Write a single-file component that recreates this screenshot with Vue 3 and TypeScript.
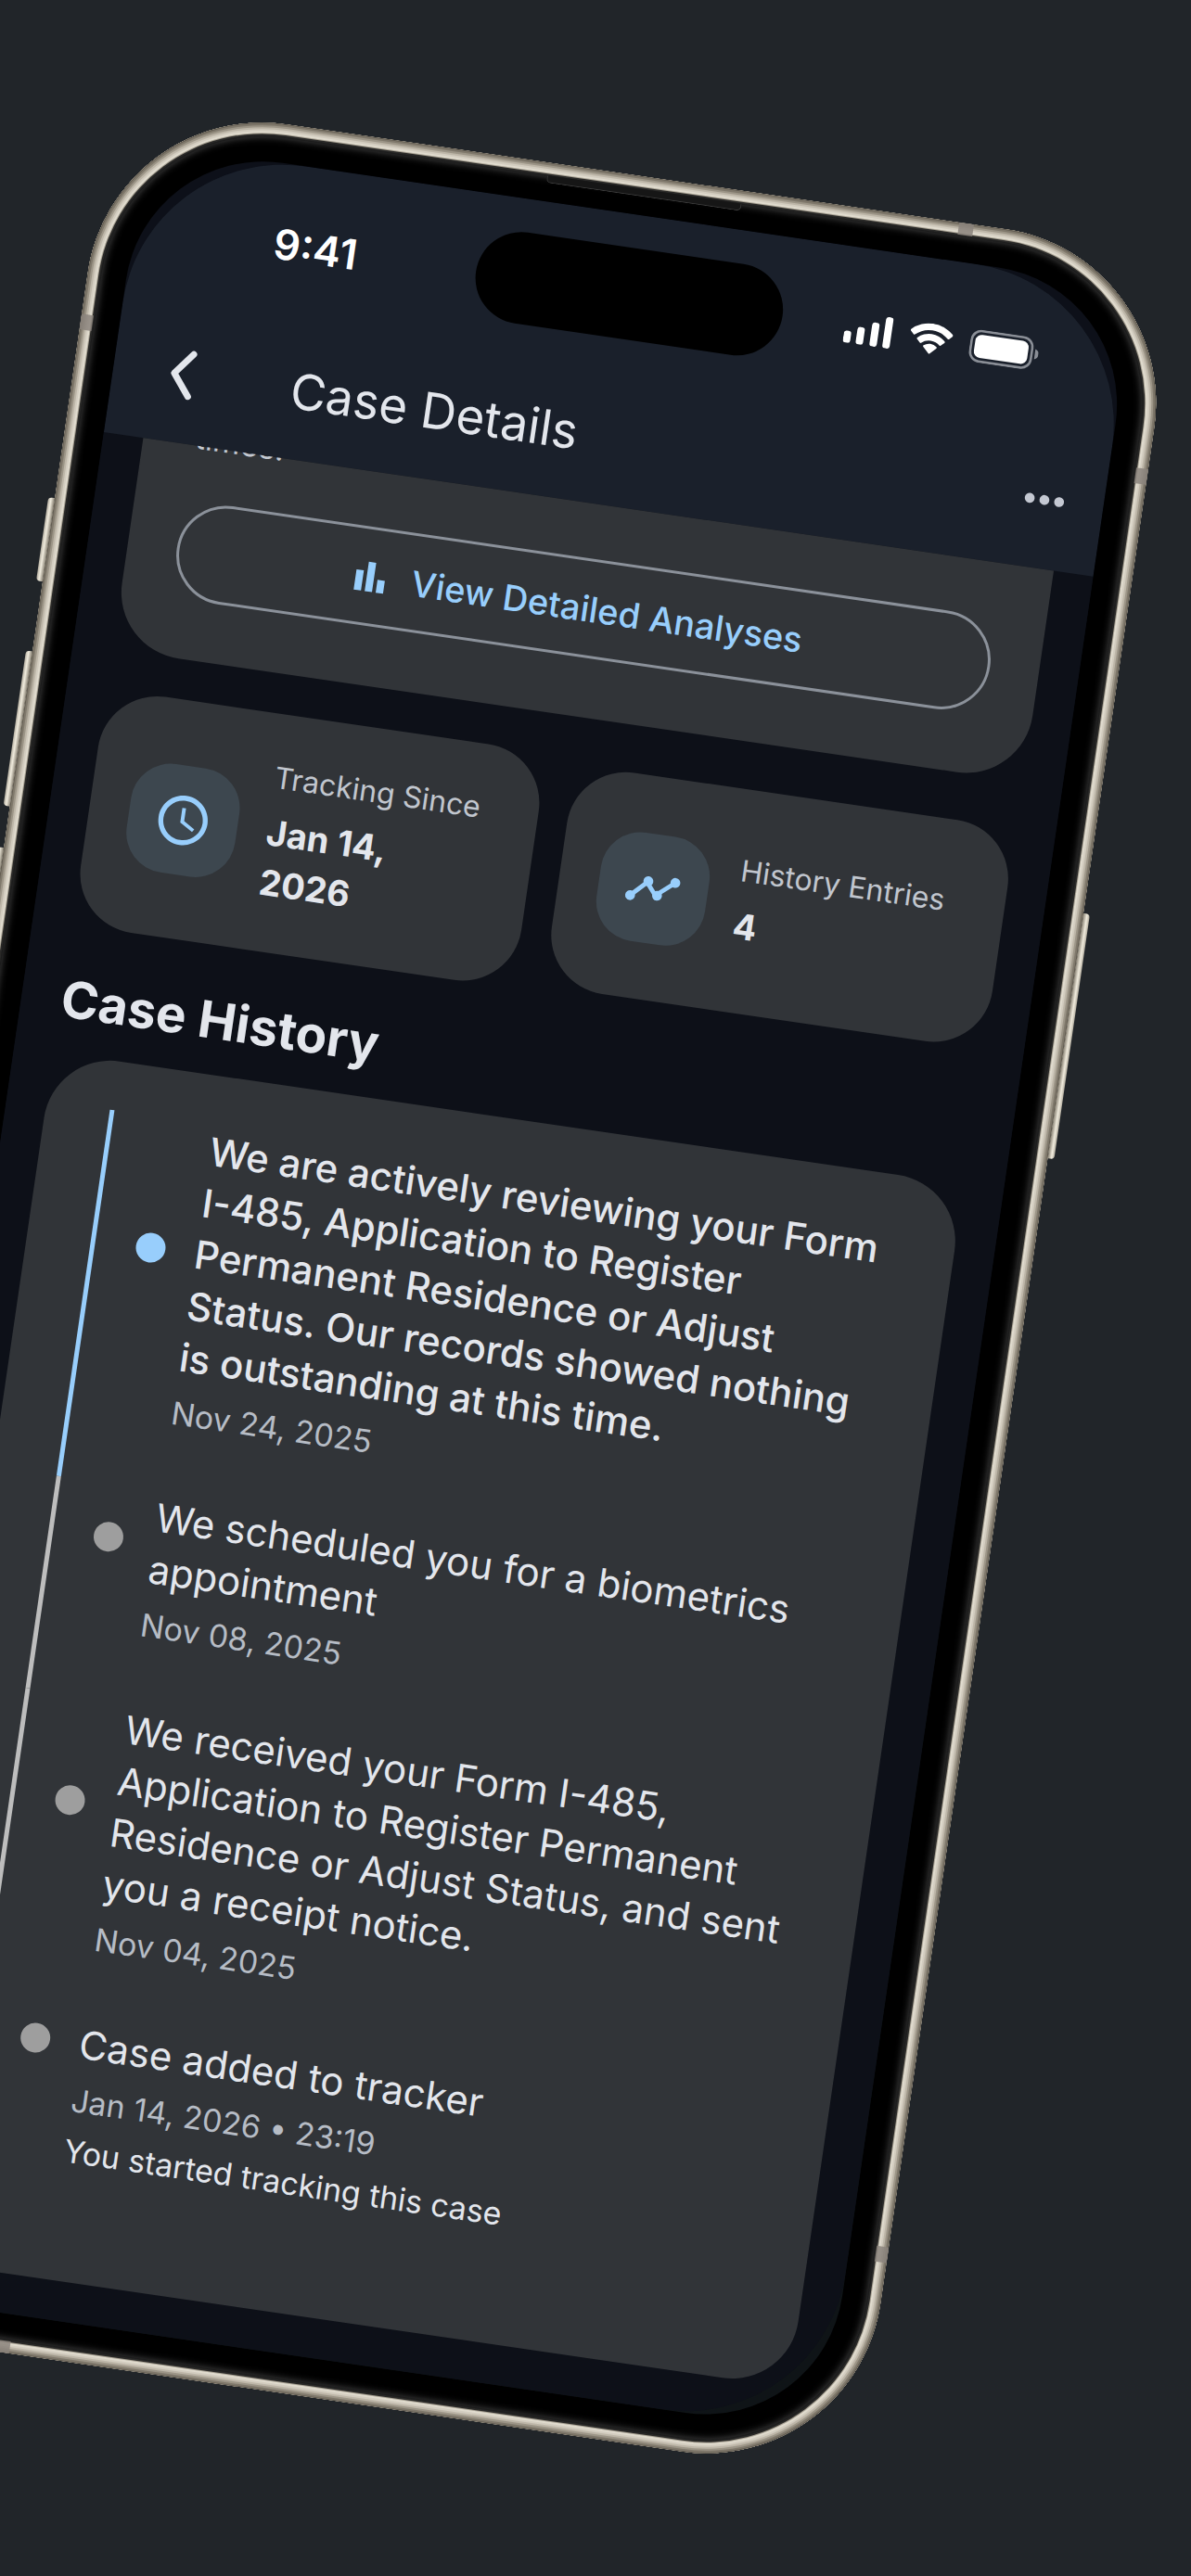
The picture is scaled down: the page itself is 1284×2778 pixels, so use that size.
<script setup lang="ts">
interface Stat {
  label: string
  value: string
  icon: 'clock' | 'trend'
}

interface Entry {
  title: string
  date: string
  note?: string
  current?: boolean
}

const stats: Stat[] = [
  { label: 'Tracking Since', value: 'Jan 14,\n2026', icon: 'clock' },
  { label: 'History Entries', value: '4', icon: 'trend' },
]

const entries: Entry[] = [
  {
    title:
      'We are actively reviewing your Form I-485, Application to Register Permanent Residence or Adjust Status. Our records showed nothing is outstanding at this time.',
    date: 'Nov 24, 2025',
    current: true,
  },
  { title: 'We scheduled you for a biometrics appointment', date: 'Nov 08, 2025' },
  {
    title:
      'We received your Form I-485, Application to Register Permanent Residence or Adjust Status, and sent you a receipt notice.',
    date: 'Nov 04, 2025',
  },
  {
    title: 'Case added to tracker',
    date: 'Jan 14, 2026 • 23:19',
    note: 'You started tracking this case',
  },
]
</script>

<template>
  <div class="page">
    <div class="stage">
      <div class="phone">
        <i class="key key-action"></i>
        <i class="key key-up"></i>
        <i class="key key-down"></i>
        <i class="key key-power"></i>
        <i class="band band-top"></i>
        <i class="band band-bottom"></i>
        <i class="band band-side left upper"></i>
        <i class="band band-side right upper"></i>
        <i class="band band-side left lower"></i>
        <i class="band band-side right lower"></i>

        <div class="bezel">
          <i class="speaker"></i>
          <div class="glass">
            <main class="screen">
              <header class="header">
                <div class="status">
                  <span class="time">9:41</span>
                  <i class="island"></i>
                  <div class="status-icons">
                    <svg class="signal" viewBox="0 0 52 34" aria-hidden="true">
                      <rect x="0" y="21" width="8" height="13" rx="3" />
                      <rect x="14" y="15" width="8" height="19" rx="3" />
                      <rect x="29" y="8" width="8" height="26" rx="3" />
                      <rect x="43" y="0" width="8" height="34" rx="3" />
                    </svg>
                    <svg class="wifi" viewBox="0 0 17 12.3" aria-hidden="true">
                      <path d="M8.5 2.6c2.5 0 4.8.9 6.6 2.6.1.1.4.1.5 0l1.300-1.300c.2-.2.2-.4 0-.6a12.100 12.100 0 0 0-16.800 0c-.2.2-.2.4 0 .6l1.300 1.300c.1.1.4.1.5 0A9.600 9.600 0 0 1 8.500 2.600z" />
                      <path d="M8.500 6.800c1.400 0 2.700.5 3.700 1.400.1.100.4.100.5 0l1.300-1.300c.2-.2.2-.4 0-.6a8 8 0 0 0-11 0c-.2.2-.2.4 0 .6l1.300 1.300c.1.100.4.100.5 0a5.500 5.500 0 0 1 3.700-1.400z" />
                      <path d="M11.100 9.600c.2-.2.2-.4 0-.6a4 4 0 0 0-5.200 0c-.2.2-.2.4 0 .6l2.300 2.300c.2.200.4.200.6 0z" />
                    </svg>
                    <svg class="battery" viewBox="0 0 75 36" aria-hidden="true">
                      <rect x="1.500" y="1.500" width="66" height="33" rx="10.500" fill="none" stroke="#8a8e96" stroke-width="2.600" />
                      <rect x="5.500" y="5.500" width="58" height="25" rx="7" />
                      <path d="M71 12.500c3 1 4 3 4 5.500s-1 4.500-4 5.500z" fill="#8a8e96" />
                    </svg>
                  </div>
                </div>
                <div class="appbar">
                  <button class="back" type="button" aria-label="Back">
                    <svg viewBox="0 0 64 64" aria-hidden="true">
                      <path d="M41 9 23 32l18 23" fill="none" stroke="currentColor" stroke-width="7" stroke-linecap="round" stroke-linejoin="round" />
                    </svg>
                  </button>
                  <h1>Case Details</h1>
                  <button class="more" type="button" aria-label="More options">
                    <svg viewBox="0 0 24 24" aria-hidden="true">
                      <circle cx="6" cy="12" r="2" />
                      <circle cx="12" cy="12" r="2" />
                      <circle cx="18" cy="12" r="2" />
                    </svg>
                  </button>
                </div>
              </header>

              <div class="content">
                <section class="card summary">
                  <p>times.</p>
                  <button class="analyses" type="button">
                    <svg viewBox="0 0 24 24" aria-hidden="true">
                      <path d="M4 9h4v11H4zM16 13h4v7h-4zM10 4h4v16h-4z" />
                    </svg>
                    View Detailed Analyses
                  </button>
                </section>

                <section class="stats">
                  <div v-for="stat in stats" :key="stat.label" class="stat">
                    <div class="stat-icon">
                      <svg v-if="stat.icon === 'clock'" viewBox="0 0 24 24" aria-hidden="true">
                        <path d="M11.990 2C6.470 2 2 6.480 2 12s4.470 10 9.990 10C17.520 22 22 17.520 22 12S17.520 2 11.990 2zM12 20c-4.420 0-8-3.580-8-8s3.580-8 8-8 8 3.580 8 8-3.580 8-8 8zm.5-13H11v6l5.250 3.150.75-1.230-4.500-2.670z" />
                      </svg>
                      <svg v-else viewBox="0 0 24 24" aria-hidden="true">
                        <path d="M3 16 9.300 9.700 13.300 14.500 21 8" fill="none" stroke="currentColor" stroke-width="1.800" />
                        <circle cx="3.200" cy="15.800" r="2" />
                        <circle cx="9.700" cy="9.200" r="2" />
                        <circle cx="14" cy="14.500" r="2" />
                        <circle cx="20.600" cy="8.300" r="2" />
                      </svg>
                    </div>
                    <div class="stat-text">
                      <span class="stat-label">{{ stat.label }}</span>
                      <strong>{{ stat.value }}</strong>
                    </div>
                  </div>
                </section>

                <h2>Case History</h2>

                <ol class="card timeline">
                  <li v-for="entry in entries" :key="entry.title" :class="{ current: entry.current }">
                    <div class="entry">
                      <div class="entry-head">
                        <i class="dot"></i>
                        <h3>{{ entry.title }}</h3>
                      </div>
                      <p class="date">{{ entry.date }}</p>
                      <p v-if="entry.note" class="note">{{ entry.note }}</p>
                    </div>
                  </li>
                </ol>
              </div>
            </main>
          </div>
        </div>
      </div>
    </div>
  </div>
</template>

<style>
body {
  background: #212529;
}
</style>

<style scoped>
.page {
  min-height: 100vh;
  overflow: hidden;
  background: #212529;
  color: #e3e6ec;
  font-family: Inter, Roboto, 'Liberation Sans', sans-serif;
}

.page *,
.page *::before {
  box-sizing: border-box;
}

h1,
h2,
h3,
p,
ol {
  margin: 0;
  padding: 0;
}

button {
  padding: 0;
  border: 0;
  background: none;
  font: inherit;
}

svg {
  display: block;
  flex: none;
  fill: currentColor;
}

/* The handset leans to the right and runs off the left edge. */
.stage {
  display: flow-root;
  transform: rotate(8.3deg);
  transform-origin: 0 0;
}

.phone {
  position: relative;
  margin: 88px -14px 0 136px;
  padding: 14px;
  border-radius: 190px;
  background: #2a2a29;
  box-shadow:
    inset 0 0 0 1px #625c51,
    inset 0 0 0 3px #7f786b,
    inset 0 0 0 5px #9c9587,
    inset 0 0 0 7px #bdb6a8,
    inset 0 0 0 9px #d3cdc0,
    inset 0 0 0 11px #e0dbce,
    inset 0 0 0 12px #a8a294,
    inset 0 0 0 13px #2b2a28;
}

.key {
  position: absolute;
  z-index: -1;
  width: 14px;
  border-radius: 4px;
  background: linear-gradient(90deg, #b5afa1, #f0ebdd 3px, #8a8375 7px, #6d675b);
}

.key-action {
  top: 435px;
  left: -7px;
  height: 91px;
}

.key-up {
  top: 602px;
  left: -7px;
  height: 169px;
}

.key-down {
  top: 816px;
  left: -7px;
  height: 169px;
}

.key-power {
  top: 718px;
  right: -7px;
  height: 267px;
  transform: scaleX(-1);
}

.band {
  position: absolute;
  background: #8b847c;
  opacity: 0.85;
}

.band-top,
.band-bottom {
  width: 16px;
  height: 13px;
}

.band-top {
  top: 0;
  right: 224px;
}

.band-bottom {
  bottom: 0;
  left: 224px;
}

.band-side {
  width: 13px;
  height: 17px;
}

.left {
  left: 0;
}

.right {
  right: 0;
}

.upper {
  top: 234px;
}

.lower {
  bottom: 233px;
}

.bezel {
  position: relative;
  padding: 28px;
  border-radius: 176px;
  background: #000;
  box-shadow:
    inset 0 0 0 1px #1c1c1c,
    inset 0 0 8px 1px #4a4a4a;
}

.speaker {
  position: absolute;
  top: 0;
  left: 50%;
  width: 212px;
  height: 8px;
  margin-left: -106px;
  border: 1px solid #3c3c3c;
  border-top: 0;
  border-radius: 0 0 5px 5px;
  background: #161616;
}

.glass {
  border-radius: 149px;
  background: linear-gradient(#0d1019 50%, #0f1417 80%);
  overflow: hidden;
}

.screen {
  border-radius: 174px;
  background: #0d1018;
  overflow: hidden;
}

.header {
  background: #1a202b;
}

.status {
  position: relative;
  display: flex;
  align-items: center;
  justify-content: space-between;
  height: 166px;
  padding: 8px 93px 0 152px;
  color: #fff;
}

.time {
  font-size: 45px;
  font-weight: 600;
  line-height: 54px;
}

.island {
  position: absolute;
  top: 36px;
  left: 50%;
  width: 334px;
  height: 99px;
  margin-left: -167px;
  border-radius: 50px;
  background: #000;
}

.status-icons {
  display: flex;
  align-items: center;
  gap: 19px;
}

.signal {
  width: 52px;
  height: 34px;
}

.wifi {
  width: 46px;
  height: 34px;
}

.battery {
  width: 75px;
  height: 36px;
}

.appbar {
  display: flex;
  align-items: center;
  height: 149px;
  padding-right: 32px;
}

.back {
  display: flex;
  align-items: center;
  justify-content: center;
  width: 150px;
  height: 128px;
  margin-right: 43px;
  color: #e3e6ec;
}

.back svg,
.more svg {
  width: 64px;
  height: 64px;
}

.more {
  margin-left: auto;
  color: #c4c8d2;
}

h1 {
  font-size: 53px;
  font-weight: 400;
  line-height: 70px;
}

.content {
  padding: 0 43px 43px;
  overflow: hidden;
}

.card {
  border-radius: 72px;
  background: #313438;
}

.summary {
  margin-top: -84px;
  padding: 53px 53px 64px;
}

.summary p {
  margin: 0 3px 47px;
  color: #c4c8d0;
  font-size: 34px;
  line-height: 43px;
}

.analyses {
  display: flex;
  align-items: center;
  justify-content: center;
  gap: 21px;
  width: 100%;
  height: 107px;
  padding-right: 18px;
  border: 3px solid #8b919a;
  border-radius: 54px;
  color: #98cefc;
  font-size: 38px;
  font-weight: 500;
  line-height: 54px;
}

.analyses svg {
  width: 48px;
  height: 48px;
}

.stats {
  display: grid;
  grid-template-columns: 1fr 1fr;
  align-items: center;
  gap: 32px;
  margin-top: 43px;
}

.stat {
  display: flex;
  align-items: center;
  gap: 32px;
  min-height: 241px;
  padding: 48px 32px 48px 43px;
  border-radius: 64px;
  background: #313438;
}

.stat-icon {
  flex: none;
  padding: 27px;
  border-radius: 43px;
  background: #3d474f;
  color: #98cefc;
}

.stat-icon svg {
  width: 64px;
  height: 64px;
}

.stat-text {
  display: flex;
  flex-direction: column;
  gap: 11px;
}

.stat-label {
  color: #c1c6ce;
  font-size: 32px;
  line-height: 42px;
  white-space: nowrap;
}

.stat strong {
  font-size: 38px;
  font-weight: 700;
  line-height: 54px;
  white-space: pre-line;
}

h2 {
  margin: 45px 0 24px;
  font-size: 55px;
  font-weight: 700;
  line-height: 70px;
}

.timeline {
  padding: 53px;
  list-style: none;
}

.timeline li {
  display: flex;
  padding-left: 16px;
}

.timeline li::before {
  content: '';
  flex: none;
  width: 5px;
  margin-right: 44px;
  background: #bdbdbd;
}

.timeline .current::before {
  background: #98cefc;
}

.entry {
  padding-bottom: 64px;
}

.entry-head {
  display: flex;
  align-items: center;
  gap: 32px;
  padding-top: 1px;
}

.dot {
  flex: none;
  width: 32px;
  height: 32px;
  border-radius: 50%;
  background: #9e9e9e;
}

.current .dot {
  background: #98cefc;
}

h3 {
  font-size: 42px;
  font-weight: 400;
  line-height: 56px;
}

.current h3 {
  font-weight: 500;
}

.date,
.note {
  margin: 11px 0 0 64px;
}

.date {
  color: #b6bcc5;
  font-size: 34px;
  line-height: 43px;
}

.note {
  font-size: 34px;
  line-height: 46px;
}
</style>
